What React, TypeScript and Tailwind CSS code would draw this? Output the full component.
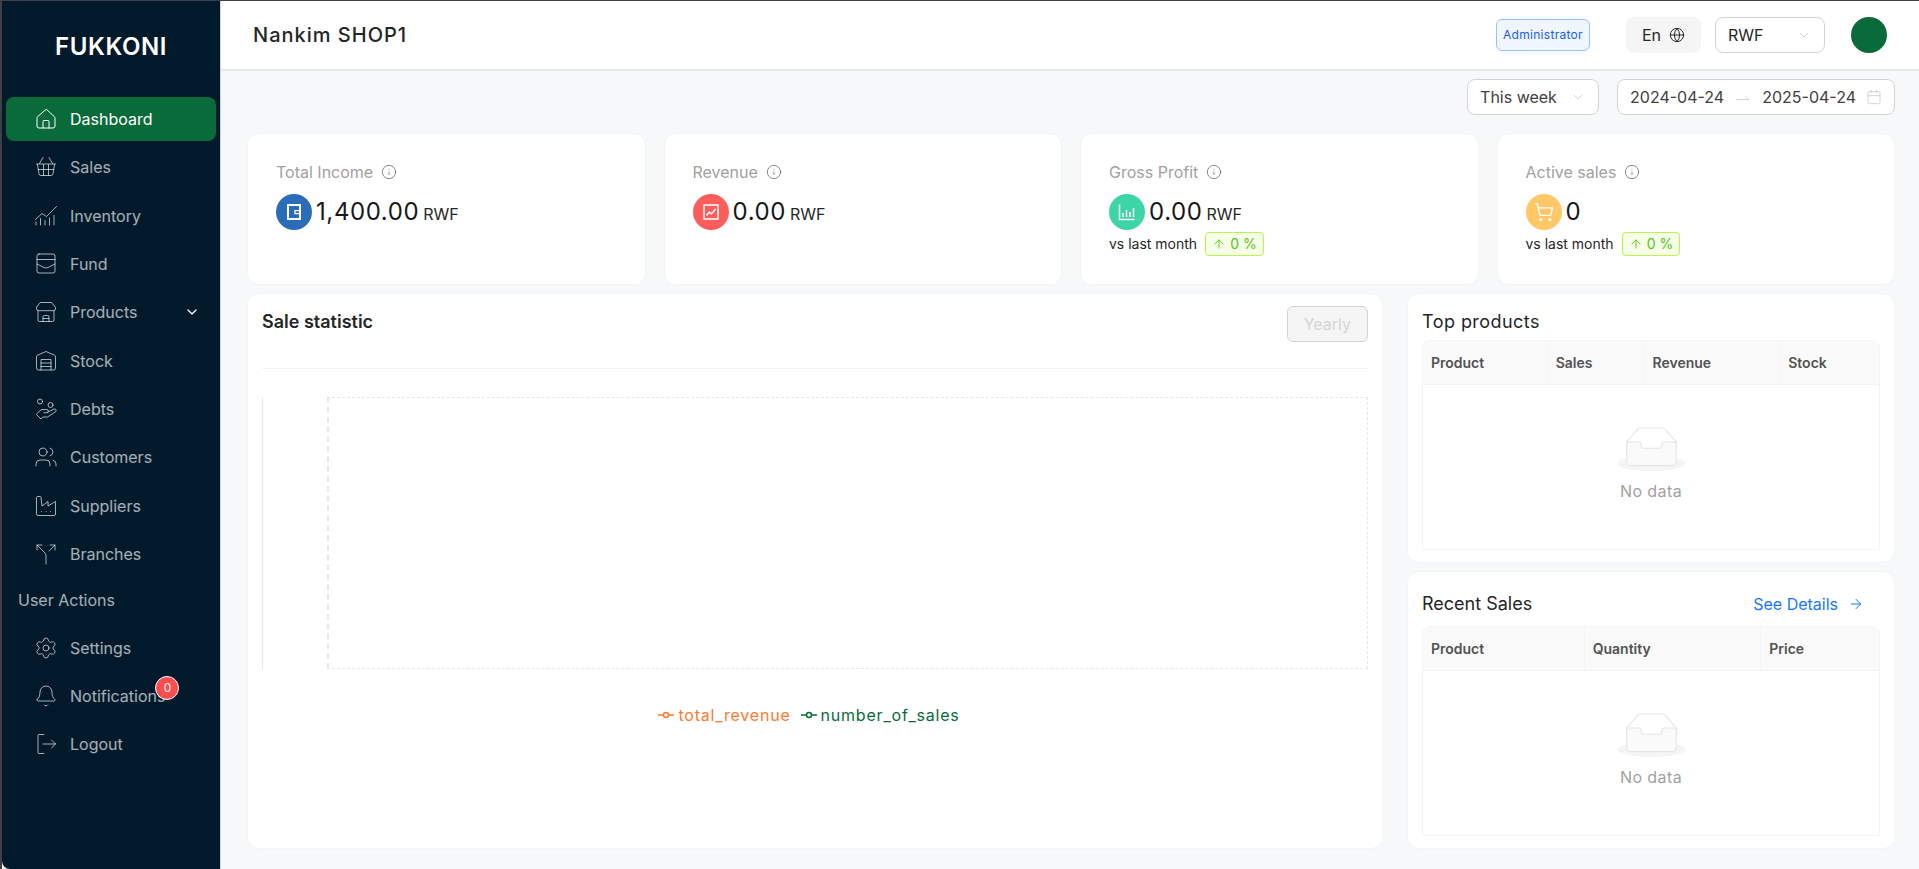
import type { ReactNode } from "react";
import {
  ArrowRight,
  ArrowUp,
  Bell,
  Calendar,
  ChevronDown,
  Globe,
  Info,
  Settings,
  ShoppingCart,
  Split,
  Users,
} from "lucide-react";

function Line({ children }: { children: ReactNode }) {
  return (
    <svg viewBox="0 0 24 24" fill="none" stroke="currentColor" strokeWidth="1" strokeLinecap="round" strokeLinejoin="round" className="w-6 h-6 shrink-0">
      {children}
    </svg>
  );
}

const HomeIcon = () => (
  <Line>
    <path d="M12 2.5 3.7 9.6Q3 10.2 3 11.2V19a2 2 0 0 0 2 2h14a2 2 0 0 0 2-2v-7.8q0-1-.7-1.6z" />
    <path d="M9 21v-6.5a1 1 0 0 1 1-1h4a1 1 0 0 1 1 1V21" />
  </Line>
);
const BasketIcon = () => (
  <Line>
    <path d="M9 2.5 5.5 8.5M15 2.5l3.5 6M2.5 9h19" />
    <path d="M3.5 9.5 5 18.8A2 2 0 0 0 7 20.5h10a2 2 0 0 0 2-1.7l1.5-9.3" />
    <path d="M4.2 14.5h15.6M9.5 9.5v11M14.5 9.5v11" />
  </Line>
);
const InventoryIcon = () => (
  <Line>
    <path d="M2 21v-3M6.5 21v-6.5M11 21v-4.5M15.5 21v-7M20 21V11.5" />
    <path d="M1.5 15.5 8 9.5l4.5 3L22.5 2.5" />
  </Line>
);
const FundIcon = () => (
  <Line>
    <rect x="3" y="2" width="18" height="19" rx="2" />
    <path d="M3 7.5h18M3 12l7 3.5q2 1 4 0l7-3.5" />
  </Line>
);
const StoreIcon = () => (
  <Line>
    <path d="M6.5 2.5h11l4 5v1.2a2 2 0 0 1-2 2H4.5a2 2 0 0 1-2-2V7.5z" />
    <path d="M4 10.7V20a1.5 1.5 0 0 0 1.5 1.5h13A1.5 1.5 0 0 0 20 20v-9.3" />
    <path d="M9 21.5V17a1.5 1.5 0 0 1 1.5-1.5h3A1.5 1.5 0 0 1 15 17v4.5M9 18.5h6" />
  </Line>
);
const WarehouseIcon = () => (
  <Line>
    <path d="M2.5 7.5Q2.5 6.7 3.3 6.3L12 2.5l8.7 3.8q.8.4.8 1.2V19a2 2 0 0 1-2 2h-15a2 2 0 0 1-2-2z" />
    <path d="M7 21V10.5h10V21M7 14h10M7 17.5h10" />
  </Line>
);
const DebtsIcon = () => (
  <Line>
    <circle cx="6" cy="4.5" r="2.5" />
    <circle cx="16.5" cy="8" r="2.5" />
    <path d="M3 16.5 7.5 12.5h5.2a1.6 1.6 0 0 1 0 3.2H10" />
    <path d="m14 15 6-3a1.6 1.6 0 0 1 1.6 2.7L13.5 20H9l-2 2-4.5-4.5" />
  </Line>
);
const FactoryIcon = () => (
  <Line>
    <path d="M2.5 3.5a1 1 0 0 1 1-1H6a1 1 0 0 1 1 .9L8 12l6-4.5V12l7.5-4.5V20a1.5 1.5 0 0 1-1.5 1.5H4A1.5 1.5 0 0 1 2.5 20z" />
    <path d="M7.5 17.5h.01M12 17.5h.01M16.5 17.5h.01" />
  </Line>
);
const LogoutIcon = () => (
  <Line>
    <path d="M10 2.5H5a1 1 0 0 0-1 1v17a1 1 0 0 0 1 1h5" />
    <path d="M9 12h12.5M17.5 8l4 4-4 4" />
  </Line>
);

const lucideProps = { strokeWidth: 1, className: "w-6 h-6 shrink-0" };

const navItems = [
  { label: "Dashboard", icon: <HomeIcon />, active: true },
  { label: "Sales", icon: <BasketIcon /> },
  { label: "Inventory", icon: <InventoryIcon /> },
  { label: "Fund", icon: <FundIcon /> },
  { label: "Products", icon: <StoreIcon />, chevron: true },
  { label: "Stock", icon: <WarehouseIcon /> },
  { label: "Debts", icon: <DebtsIcon /> },
  { label: "Customers", icon: <Users {...lucideProps} /> },
  { label: "Suppliers", icon: <FactoryIcon /> },
  { label: "Branches", icon: <Split {...lucideProps} /> },
];

function NavItem({ label, icon, active, chevron }: { label: string; icon: ReactNode; active?: boolean; chevron?: boolean }) {
  return (
    <a
      className={
        active
          ? "flex items-center gap-3 h-11 pl-7 pr-4 rounded-lg bg-[#0a6b3a] text-white"
          : "flex items-center gap-3 h-11 pl-7 pr-4 rounded-lg text-white/65"
      }
    >
      {icon}
      <span className="text-base">{label}</span>
      {chevron && <ChevronDown className="w-4 h-4 ml-auto text-white" strokeWidth={2} />}
    </a>
  );
}

function Sidebar() {
  return (
    <aside className="w-[218px] shrink-0 bg-[#00192b] rounded-bl-lg px-1">
      <div className="h-24 pb-1 flex items-center justify-center text-white text-2xl font-semibold tracking-wide">FUKKONI</div>
      <nav className="flex flex-col justify-between h-[479px]">
        {navItems.map((item) => (
          <NavItem key={item.label} {...item} />
        ))}
      </nav>
      <p className="pt-3 pb-3.5 pl-3 text-base leading-6 text-white/65">User Actions</p>
      <div className="flex flex-col gap-1">
        <NavItem label="Settings" icon={<Settings {...lucideProps} />} />
        <a className="flex items-center gap-3 h-11 pl-7 pr-4 text-white/65">
          <Bell {...lucideProps} />
          <span className="relative text-base">
            Notifications
            <span className="absolute -right-3.5 -top-2 flex items-center justify-center w-6 h-6 rounded-full bg-[#ff4d4f] border border-white text-white text-xs">
              0
            </span>
          </span>
        </a>
        <NavItem label="Logout" icon={<LogoutIcon />} />
      </div>
    </aside>
  );
}

function Header() {
  return (
    <header className="h-[70px] shrink-0 flex items-center bg-white border-b-2 border-gray-200 pl-8 pr-8">
      <h1 className="text-xl font-medium tracking-wider text-neutral-800">Nankim SHOP1</h1>
      <span className="ml-auto h-8 flex items-center px-1.5 rounded-md border border-blue-300 bg-blue-50 text-xs tracking-wide text-blue-600">
        Administrator
      </span>
      <button className="ml-9 h-9 px-4 flex items-center justify-center gap-2 rounded-lg bg-neutral-100 text-base text-neutral-800">
        En <Globe className="w-4 h-4" strokeWidth={1.5} />
      </button>
      <div className="ml-3.5 h-9 w-[110px] flex items-center justify-between px-3 rounded-lg border border-neutral-300 text-base text-neutral-800">
        RWF
        <ChevronDown className="w-4 h-4 text-neutral-300" strokeWidth={1.5} />
      </div>
      <div className="ml-6.5 w-9 h-9 rounded-full bg-[#0a6b3a]" />
    </header>
  );
}

function Filters() {
  return (
    <div className="flex justify-end gap-4.5 pt-2 mb-4.5 text-neutral-700">
      <div className="h-9 w-[132px] flex items-center justify-between px-3 rounded-lg border border-neutral-300 bg-white text-base">
        This week
        <ChevronDown className="w-4 h-4 text-neutral-300" strokeWidth={1.5} />
      </div>
      <div className="h-9 flex items-center gap-3 px-3 rounded-lg border border-neutral-300 bg-white text-base">
        2024-04-24
        <svg viewBox="0 0 14 8" fill="none" stroke="currentColor" className="w-3.5 h-2 text-neutral-300">
          <path d="M0 6.5h13L9.5 3" />
        </svg>
        2025-04-24
        <Calendar className="w-4 h-4 -ml-0.5 text-neutral-300" strokeWidth={1.5} />
      </div>
    </div>
  );
}

function StatCard({ title, value, unit, color, glyph, trend }: { title: string; value: string; unit?: string; color: string; glyph: ReactNode; trend?: boolean }) {
  return (
    <div className="h-38 rounded-xl border border-gray-100 bg-white px-7 pt-6.5">
      <div className="flex items-center gap-2 text-base leading-6 text-neutral-400">
        {title}
        <Info className="w-4 h-4 text-neutral-500" strokeWidth={1.25} />
      </div>
      <div className="mt-2.5 flex items-center gap-1">
        <span className={`${color} w-9 h-9 rounded-full flex items-center justify-center text-white`}>{glyph}</span>
        <span className="text-2xl tracking-wide text-neutral-900">{value}</span>
        {unit && <span className="text-base text-neutral-800 mt-1">{unit}</span>}
      </div>
      {trend && (
        <div className="mt-0.5 flex items-center gap-2 text-sm text-neutral-800">
          vs last month
          <span className="h-6 flex items-center gap-1 px-1.5 rounded-sm border border-lime-300 bg-lime-50 text-sm text-[#52c41a]">
            <ArrowUp className="w-3.5 h-3.5" strokeWidth={1.5} /> 0 %
          </span>
        </div>
      )}
    </div>
  );
}

const glyphClass = "w-5 h-5";

const stats = [
  {
    title: "Total Income",
    value: "1,400.00",
    unit: "RWF",
    color: "bg-[#2b6cb8]",
    glyph: (
      <svg viewBox="0 0 20 20" fill="none" stroke="currentColor" strokeWidth="2" className={glyphClass}>
        <path d="M4 3h12v14H4z" />
        <path d="M11 8.5h5v3h-5z" strokeWidth="1.25" />
      </svg>
    ),
  },
  {
    title: "Revenue",
    value: "0.00",
    unit: "RWF",
    color: "bg-[#ff5c5c]",
    glyph: (
      <svg viewBox="0 0 20 20" fill="none" stroke="currentColor" strokeWidth="1.5" className={glyphClass}>
        <path d="M3 3h14v14H3zM5.5 13.5l3-3.5 2 2 4-5" />
      </svg>
    ),
  },
  {
    title: "Gross Profit",
    value: "0.00",
    unit: "RWF",
    color: "bg-[#3dd5a5]",
    trend: true,
    glyph: (
      <svg viewBox="0 0 20 20" fill="none" stroke="currentColor" strokeWidth="1.5" className={glyphClass}>
        <path d="M2.5 2.5v15h15M6 15v-4M9.5 15V8M13 15v-5M16.5 15V6" />
      </svg>
    ),
  },
  {
    title: "Active sales",
    value: "0",
    color: "bg-[#ffc766]",
    trend: true,
    glyph: <ShoppingCart className={glyphClass} strokeWidth={1.75} />,
  },
];

function LegendMark({ className }: { className: string }) {
  return (
    <svg viewBox="0 0 16 8" fill="none" stroke="currentColor" strokeWidth="1.5" className={`${className} w-4 h-2`}>
      <path d="M0 4h5M11 4h5" />
      <circle cx="8" cy="4" r="2.5" />
    </svg>
  );
}

function SaleStatistic() {
  return (
    <section className="flex-1 rounded-xl border border-gray-100 bg-white px-3.5 pt-3">
      <div className="flex items-start justify-between">
        <h2 className="mt-0.5 text-lg font-semibold text-neutral-800">Sale statistic</h2>
        <button className="h-9 px-4 rounded-md border border-neutral-300 bg-neutral-100 text-base text-neutral-300">Yearly</button>
      </div>
      <div className="mt-6.5 border-t border-gray-100" />
      <div className="mt-7 h-[272px] border-l border-gray-200 pl-16">
        <div className="h-full border border-l-2 border-dashed border-gray-200" />
      </div>
      <div className="mt-8 pr-3 flex items-center justify-center gap-2.5 text-base leading-7 tracking-wider">
        <span className="flex items-center gap-1 text-[#ff7a2f]">
          <LegendMark className="text-[#ff7a2f]" /> total_revenue
        </span>
        <span className="flex items-center gap-1 text-[#0a6b3a]">
          <LegendMark className="text-[#0a6b3a]" /> number_of_sales
        </span>
      </div>
    </section>
  );
}

function EmptyBox() {
  return (
    <div className="flex-1 flex flex-col items-center justify-center pb-1">
      <svg width="69" height="44" viewBox="0 0 64 41">
        <g transform="translate(0 1)" fill="none" fillRule="evenodd">
          <ellipse fill="#f5f5f5" cx="32" cy="33" rx="32" ry="7" />
          <g fillRule="nonzero" stroke="#e5e5e5">
            <path d="M55 12.76 44.854 1.258C44.367.474 43.656 0 42.907 0H21.093c-.749 0-1.46.474-1.947 1.257L9 12.761V22h46v-9.24z" />
            <path
              d="M41.613 15.931c0-1.605.994-2.93 2.227-2.931H55v18.137C55 33.26 53.68 35 52.05 35h-40.1C10.32 35 9 33.259 9 31.137V13h11.16c1.233 0 2.227 1.323 2.227 2.928v.022c0 1.605 1.005 2.901 2.237 2.901h14.752c1.232 0 2.237-1.308 2.237-2.913v-.007z"
              fill="#fafafa"
            />
          </g>
        </g>
      </svg>
      <p className="mt-2 text-base tracking-wide text-neutral-400">No data</p>
    </div>
  );
}

function EmptyTable({ columns, cols }: { columns: string[]; cols: string }) {
  return (
    <div className="flex-1 flex flex-col rounded-t-lg border border-gray-100">
      <div className={`grid ${cols} h-11 shrink-0 rounded-t-lg bg-neutral-50 border-b border-gray-100`}>
        {columns.map((c, i) => (
          <div
            key={c}
            className={
              i < columns.length - 1
                ? "flex items-center px-2 text-sm font-semibold text-neutral-600 border-r border-gray-100"
                : "flex items-center px-2 text-sm font-semibold text-neutral-600"
            }
          >
            {c}
          </div>
        ))}
      </div>
      <EmptyBox />
    </div>
  );
}

function RightColumn() {
  return (
    <div className="w-[488px] shrink-0 flex flex-col gap-2">
      <section className="h-[270px] flex flex-col rounded-xl border border-gray-100 bg-white px-3.5 pt-3.5 pb-3">
        <h2 className="text-lg leading-7 tracking-wide text-neutral-800 mb-1">Top products</h2>
        <EmptyTable columns={["Product", "Sales", "Revenue", "Stock"]} cols="grid-cols-[125fr_97fr_136fr_99fr]" />
      </section>
      <section className="flex-1 flex flex-col rounded-xl border border-gray-100 bg-white px-3.5 pt-4.5 pb-3">
        <div className="flex items-center justify-between mb-2">
          <h2 className="text-lg leading-7 text-neutral-800">Recent Sales</h2>
          <a className="flex items-center gap-2.5 mr-4 text-base text-[#1677ff]">
            See Details <ArrowRight className="w-4 h-4" strokeWidth={1.5} />
          </a>
        </div>
        <EmptyTable columns={["Product", "Quantity", "Price"]} cols="grid-cols-[162fr_177fr_118fr]" />
      </section>
    </div>
  );
}

export default function App() {
  return (
    <div className="flex h-screen overflow-hidden border-t border-l-2 border-neutral-700 bg-[#f7f8fa] font-['Inter',sans-serif]">
      <Sidebar />
      <div className="flex-1 min-w-0 flex flex-col border-l border-gray-300">
        <Header />
        <main className="flex-1 min-h-0 flex flex-col pl-6.5 pr-6 pb-5">
          <Filters />
          <div className="grid grid-cols-4 gap-4.5">
            {stats.map((s) => (
              <StatCard key={s.title} {...s} />
            ))}
          </div>
          <div className="flex-1 min-h-0 flex gap-6 mt-2">
            <SaleStatistic />
            <RightColumn />
          </div>
        </main>
      </div>
    </div>
  );
}
